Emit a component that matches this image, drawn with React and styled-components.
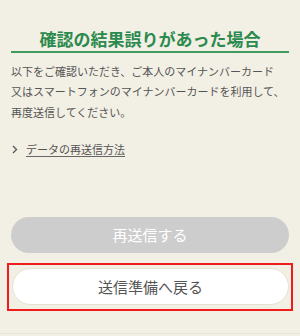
import React from "react";
import styled, { createGlobalStyle } from "styled-components";

const Global = createGlobalStyle`
  html, body { margin: 0; padding: 0; background: #f2efe4; }
  body { font-family: "Noto Sans CJK JP", "Noto Sans", sans-serif; }
`;

const Page = styled.div`
  width: 300px;
  height: 336px;
  box-sizing: border-box;
  padding: 28px 11px 0;
  display: flex;
  flex-direction: column;
  position: relative;
`;

const Title = styled.h2`
  margin: 0;
  font-size: 17px;
  line-height: 22px;
  font-weight: 700;
  color: #2b8a4e;
  text-align: center;
  padding-bottom: 1px;
  border-bottom: 2px solid #3f9b60;
`;

const Body = styled.p`
  margin: 8px 0 0;
  font-size: 11px;
  line-height: 20.4px;
  color: #555;
`;

const LinkRow = styled.a`
  margin-top: 17px;
  display: flex;
  align-items: center;
  gap: 8px;
  font-size: 11px;
  line-height: 20px;
  color: #555;
  padding-left: 1px;
  text-decoration: none;
`;

const LinkText = styled.span`
  text-decoration: underline;
  text-decoration-color: #666;
  text-underline-offset: 2px;
`;

const Button = styled.button`
  display: block;
  width: 100%;
  box-sizing: border-box;
  border-radius: 20px;
  font-family: inherit;
  font-size: 15px;
  height: ${(p) => (p.$primary ? "36px" : "37.5px")};
  background: ${(p) => (p.$primary ? "#cdcdcd" : "#ffffff")};
  color: ${(p) => (p.$primary ? "#ffffff" : "#555555")};
  border: ${(p) => (p.$primary ? "none" : "1px solid #e6e1d3")};
  padding: 0;
`;

const PrimaryWrap = styled.div`
  margin-top: 57.5px;
`;

const Highlight = styled.div`
  margin: 10px -4px 0;
  border: 2px solid #f21b1b;
  padding: 3px 2px 4px 3px;
`;

const Footer = styled.div`
  position: absolute;
  left: 0;
  right: 0;
  bottom: 2px;
  border-top: 1px solid #e7e3d7;
`;

export default function App() {
  return (
    <>
      <Global />
      <Page>
        <Title>確認の結果誤りがあった場合</Title>
        <Body>
          以下をご確認いただき、ご本人のマイナンバーカード
          <br />
          又はスマートフォンのマイナンバーカードを利用して、
          <br />
          再度送信してください。
        </Body>
        <LinkRow href="#">
          <svg width="6" height="9" viewBox="0 0 6 9">
            <path d="M1 1l3.5 3.5L1 8" fill="none" stroke="#555" strokeWidth="1.3" />
          </svg>
          <LinkText>データの再送信方法</LinkText>
        </LinkRow>
        <PrimaryWrap>
          <Button $primary disabled>再送信する</Button>
        </PrimaryWrap>
        <Highlight>
          <Button>送信準備へ戻る</Button>
        </Highlight>
        <Footer />
      </Page>
    </>
  );
}
